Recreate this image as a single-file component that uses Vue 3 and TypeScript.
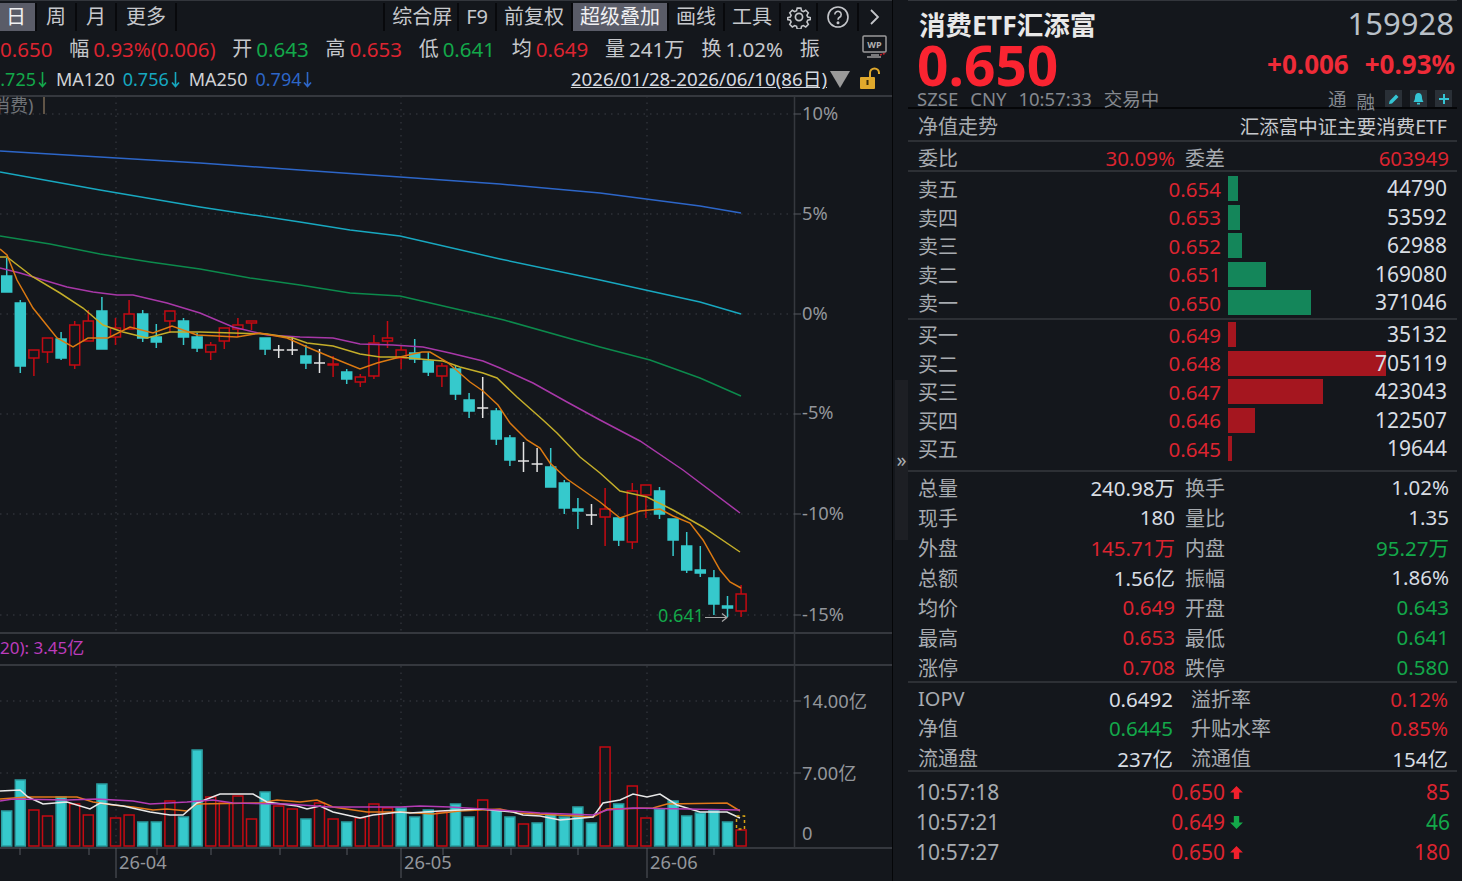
<template>
  <div class="screen">
    <!-- 左侧K线区 -->
    <section class="left">
      <div class="strip"></div>
      <nav class="toolbar">
        <div class="tool-group periods">
          <span v-for="p in periods" :key="p" class="tool" :class="{ active: p === '日' }">{{ p }}</span>
        </div>
        <div class="tool-group tools">
          <span v-for="t in tools" :key="t" class="tool" :class="{ active: t === '超级叠加' }">{{ t }}</span>
          <span class="tool icon gear">
            <svg width="24" height="24" viewBox="0 0 24 24" fill="none" stroke="#c4c6ca" stroke-width="1.7">
              <path d="M10 2.500h4l.7 2.900 2 .9 2.600-1.500 2.800 2.800-1.500 2.600.9 2 2.900.7v2l-2.900.7-.9 2 1.500 2.600-2.800 2.800-2.600-1.500-2 .9-.7 2.900h-4l-.7-2.900-2-.9-2.600 1.500-2.800-2.800 1.500-2.600-.9-2-2.900-.7v-2l2.900-.7.9-2-1.500-2.600 2.800-2.800 2.600 1.500 2-.9z" transform="translate(1 0.800) scale(0.92)" />
              <circle cx="12" cy="12" r="3.600" />
            </svg>
          </span>
          <span class="tool icon">
            <svg width="24" height="24" viewBox="0 0 24 24" fill="none" stroke="#c4c6ca" stroke-width="1.600">
              <circle cx="12" cy="12" r="10" />
              <path d="M8.800 9.500a3.200 3.200 0 1 1 4.800 2.800c-1 .6-1.600 1.200-1.600 2.400" />
              <circle cx="12" cy="17.800" r="0.700" fill="#c4c6ca" />
            </svg>
          </span>
          <span class="tool icon chevron">
            <svg width="14" height="18" viewBox="0 0 14 18" fill="none" stroke="#c4c6ca" stroke-width="1.800"><path d="M4 2l7 7-7 7" /></svg>
          </span>
        </div>
      </nav>

      <div class="quote-line">
        <span v-for="q in quoteLine" :key="q.label + q.value" class="quote-item">
          <em v-if="q.label">{{ q.label }}</em>
          <b :class="q.tone">{{ q.value }}</b>
        </span>
        <span class="wp-icon">
          <svg width="26" height="26" viewBox="0 0 26 26" fill="none">
            <rect x="1" y="2" width="23" height="16" rx="1" stroke="#9a9a9a" stroke-width="1.500" />
            <text x="12.500" y="14" text-anchor="middle" class="wp-text">WP</text>
            <path d="M9 21h8M5 23h14" stroke="#9a9a9a" stroke-width="1.500" />
            <path d="M18 21l6-2" stroke="#c8202a" stroke-width="1.500" stroke-dasharray="2 1" />
          </svg>
        </span>
      </div>

      <div class="ma-line">
        <template v-for="m in maItems" :key="m.value">
          <span v-if="m.name" class="ma-name">{{ m.name }}</span>
          <span class="ma-value" :class="[m.tone, { 'ma-clip': !m.name }]">
            {{ m.value }}
            <svg width="9" height="17" viewBox="0 0 9 17" fill="none" stroke="currentColor" stroke-width="1.600"><path d="M4.500 1v14M1 11.500l3.500 4 3.500-4" /></svg>
          </span>
        </template>
        <span class="range">2026/01/28-2026/06/10(86日)</span>
        <span class="range-arrow"></span>
        <svg class="lock" width="24" height="24" viewBox="0 0 24 24" fill="none">
          <rect x="1" y="10" width="15" height="12" rx="1" fill="#e0a92c" />
          <rect x="7.500" y="13" width="2" height="5" fill="#3a2c08" />
          <path d="M11 10V6a4.500 4.500 0 0 1 9 0v1" stroke="#e0a92c" stroke-width="2" />
        </svg>
      </div>

      <svg class="chart" width="893" height="786" viewBox="0 95 893 786">
        <!-- 网格 -->
        <g stroke="#3b3e44" stroke-dasharray="1.500 5">
          <line v-for="y in priceGrid" :key="'g' + y" x1="0" x2="794" :y1="y" :y2="y" />
          <line v-for="x in gridX" :key="'v' + x" :x1="x" :x2="x" y1="96" y2="632" />
          <line v-for="x in gridX" :key="'w' + x" :x1="x" :x2="x" y1="666" y2="847" />
          <line x1="0" x2="794" y1="701" y2="701" />
          <line x1="0" x2="794" y1="773" y2="773" />
        </g>
        <g stroke="#35383e" stroke-width="2">
          <line x1="0" x2="893" y1="96" y2="96" />
          <line x1="0" x2="893" y1="633" y2="633" />
          <line x1="0" x2="893" y1="665" y2="665" />
          <line x1="0" x2="893" y1="848" y2="848" />
          <line x1="794.500" x2="794.500" y1="96" y2="848" stroke-width="1.500" />
        </g>
        <g stroke="#55585e">
          <line v-for="y in [114, 214, 314, 414, 514, 615, 701, 773]" :key="'t' + y" x1="794" x2="801" :y1="y" :y2="y" />
          <line v-for="x in dateTicks" :key="'d' + x" :x1="x" :x2="x" y1="848" y2="855" />
          <line v-for="x in gridX" :key="'l' + x" :x1="x" :x2="x" y1="848" y2="878" />
        </g>

        <text x="-8" y="112" class="legend">消费)</text>
        <line x1="44" x2="44" y1="97" y2="114" stroke="#7a6a55" stroke-width="1.500" />

        <!-- K线 -->
        <g v-for="c in candleShapes" :key="c.x">
          <line :x1="c.x" :x2="c.x" :y1="c.hi" :y2="c.lo" :stroke="c.stroke" stroke-width="1.500" />
          <line v-if="c.kind === 'x'" :x1="c.x - 5.500" :x2="c.x + 5.500" :y1="c.top" :y2="c.top" stroke="#e4e4e4" stroke-width="1.500" />
          <rect v-else :x="c.x - 5" :y="c.top" width="10" :height="c.height" :fill="c.fill" :stroke="c.stroke" stroke-width="1.500" />
        </g>

        <!-- 均线 -->
        <polyline v-for="l in maLines" :key="l.color" :points="l.points" :stroke="l.color" fill="none" stroke-width="1.500" />

        <text x="658" y="622" class="low-label">0.641</text>
        <path d="M705 617.500h22m-5-4l5 4-5 4" stroke="#a8a8a8" stroke-width="1.200" fill="none" />

        <text x="0" y="654" class="vol-legend">20): 3.45亿</text>

        <!-- 成交额 -->
        <rect v-for="b in volumeBars" :key="'b' + b.x" :x="b.x - 5" :y="b.top" width="10" :height="846 - b.top" :fill="b.fill" :stroke="b.stroke" stroke-width="1.500" />
        <polyline v-for="l in volLines" :key="l.color" :points="l.points" :stroke="l.color" fill="none" stroke-width="1.500" />
        <rect x="736.500" y="816" width="8" height="13" fill="none" stroke="#d9a514" stroke-width="1.500" stroke-dasharray="3 3" />

        <!-- 坐标 -->
        <text v-for="a in axisLabels" :key="a.t" x="802" :y="a.y" class="axis">{{ a.t }}</text>
        <text v-for="d in dateLabels" :key="d.t" :x="d.x" y="869" class="axis">{{ d.t }}</text>
      </svg>
    </section>

    <!-- 折叠手柄 -->
    <div class="handle">
      <div class="handle-tab">»</div>
    </div>

    <!-- 右侧盘口 -->
    <aside class="panel">
      <div class="strip"></div>
      <header class="head">
        <div class="head-row title-row">
          <h1>消费ETF汇添富</h1>
          <span class="code">159928</span>
        </div>
        <div class="head-row price-row">
          <strong class="price">0.650</strong>
          <span class="change">
            <span>+0.006</span>
            <span>+0.93%</span>
          </span>
        </div>
        <div class="head-row sub-row">
          <span class="sub-left">
            <span>SZSE</span><span>CNY</span><span>10:57:33</span><span>交易中</span>
          </span>
          <span class="sub-right">
            <span class="tag">通</span>
            <span class="tag low">融</span>
            <span class="mini">
              <svg width="12" height="12" viewBox="0 0 12 12" fill="#34c4d4"><path d="M1 11l.6-3L8 1.500 10.500 4 4 10.400z" /></svg>
            </span>
            <span class="mini">
              <svg width="13" height="13" viewBox="0 0 13 13" fill="#34c4d4"><path d="M6.500 1C4.200 1 3 3 3 5.500 3 8 2 9 1.500 10h10C11 9 10 8 10 5.500 10 3 8.800 1 6.500 1z" /><rect x="5" y="10.800" width="3" height="1.700" /></svg>
            </span>
            <span class="mini">
              <svg width="12" height="12" viewBox="0 0 12 12" fill="#34c4d4"><path d="M5 1h2v4h4v2H7v4H5V7H1V5h4z" /></svg>
            </span>
          </span>
        </div>
      </header>

      <div class="line nav-row">
        <span class="lab">净值走势</span>
        <span class="fund">汇添富中证主要消费ETF</span>
      </div>

      <div class="line pair-row ratio-row">
        <div class="cell"><span class="lab">委比</span><span class="red">30.09%</span></div>
        <div class="cell"><span class="lab">委差</span><span class="red">603949</span></div>
      </div>

      <div class="line book sell-book">
        <div v-for="r in sellRows" :key="r.name" class="book-row">
          <span class="lab">{{ r.name }}</span>
          <span class="red book-price">{{ r.price }}</span>
          <div class="depth">
            <i class="bar sell" :style="{ width: barWidth(r.vol) + 'px' }"></i>
            <span class="val">{{ r.vol }}</span>
          </div>
        </div>
      </div>

      <div class="line book buy-book">
        <div v-for="r in buyRows" :key="r.name" class="book-row">
          <span class="lab">{{ r.name }}</span>
          <span class="red book-price">{{ r.price }}</span>
          <div class="depth">
            <i class="bar buy" :style="{ width: barWidth(r.vol) + 'px' }"></i>
            <span class="val">{{ r.vol }}</span>
          </div>
        </div>
      </div>

      <div class="line stats">
        <div v-for="s in statRows" :key="s.a" class="pair-row">
          <div class="cell"><span class="lab">{{ s.a }}</span><span :class="s.at">{{ s.av }}</span></div>
          <div class="cell"><span class="lab">{{ s.b }}</span><span :class="s.bt">{{ s.bv }}</span></div>
        </div>
      </div>

      <div class="line etf">
        <div v-for="s in etfRows" :key="s.a" class="pair-row">
          <div class="cell"><span class="lab">{{ s.a }}</span><span :class="s.at">{{ s.av }}</span></div>
          <div class="cell"><span class="lab">{{ s.b }}</span><span :class="s.bt">{{ s.bv }}</span></div>
        </div>
      </div>

      <div class="ticks">
        <div v-for="t in ticks" :key="t.time" class="tick-row">
          <span class="lab">{{ t.time }}</span>
          <span class="red price-cell">{{ t.price }}</span>
          <svg width="15" height="15" viewBox="0 0 14 14" :fill="t.up ? '#f0202c' : '#14a84a'">
            <path v-if="t.up" d="M7 1l6 6H9.500v6h-5V7H1z" />
            <path v-else d="M7 13L1 7h3.500V1h5v6H13z" />
          </svg>
          <span :class="t.volTone" class="tick-vol">{{ t.vol }}</span>
        </div>
      </div>
    </aside>
  </div>
</template>

<script setup lang="ts">
type Kind = 'u' | 'd' | 'x'
type Candle = [Kind, number, number, number, number]

const periods = ['日', '周', '月', '更多']
const tools = ['综合屏', 'F9', '前复权', '超级叠加', '画线', '工具']

const quoteLine = [
  { label: '', value: '0.650', tone: 'red' },
  { label: '幅', value: '0.93%(0.006)', tone: 'red' },
  { label: '开', value: '0.643', tone: 'green' },
  { label: '高', value: '0.653', tone: 'red' },
  { label: '低', value: '0.641', tone: 'green' },
  { label: '均', value: '0.649', tone: 'red' },
  { label: '量', value: '241万', tone: 'plain' },
  { label: '换', value: '1.02%', tone: 'plain' },
  { label: '振', value: '', tone: 'plain' }
]

const maItems = [
  { name: '', value: '0.725', tone: 'green' },
  { name: 'MA120', value: '0.756', tone: 'cyan' },
  { name: 'MA250', value: '0.794', tone: 'blue' }
]

// 屏幕坐标：类型, 实体上沿, 实体下沿, 上影, 下影
const candles: Candle[] = [
  ['d', 276, 292, 258, 292], ['d', 303, 366, 300, 373], ['u', 350, 358, 350, 376], ['u', 338, 352, 338, 363],
  ['d', 339, 358, 332, 360], ['u', 325, 365, 321, 369], ['u', 321, 341, 310, 341], ['d', 311, 349, 297, 349],
  ['u', 328, 337, 318, 345], ['u', 314, 329, 300, 329], ['d', 314, 338, 310, 342], ['d', 337, 342, 324, 348],
  ['u', 311, 321, 311, 333], ['d', 321, 337, 318, 345], ['d', 337, 348, 333, 352], ['u', 345, 352, 342, 360],
  ['u', 328, 341, 328, 349], ['u', 325, 329, 318, 337], ['u', 321, 323, 321, 330], ['d', 338, 349, 338, 355],
  ['x', 350, 350, 345, 358], ['x', 350, 350, 337, 355], ['d', 356, 363, 345, 369], ['x', 363, 363, 349, 373],
  ['u', 364, 365, 356, 377], ['d', 372, 379, 369, 384], ['u', 377, 382, 374, 387], ['u', 343, 376, 335, 379],
  ['u', 338, 341, 321, 348], ['u', 350, 358, 345, 369], ['d', 353, 359, 339, 363], ['d', 361, 372, 352, 376],
  ['u', 366, 376, 363, 387], ['d', 369, 394, 366, 400], ['d', 400, 411, 393, 418], ['x', 408, 408, 377, 418],
  ['d', 411, 439, 408, 445], ['d', 438, 460, 435, 466], ['x', 461, 461, 442, 472], ['x', 464, 464, 448, 472],
  ['d', 467, 487, 448, 487], ['d', 483, 508, 480, 514], ['d', 509, 511, 498, 529], ['x', 515, 515, 504, 525],
  ['u', 509, 517, 488, 546], ['d', 518, 540, 518, 546], ['u', 491, 542, 483, 549], ['u', 485, 495, 485, 518],
  ['d', 491, 514, 487, 519], ['d', 519, 540, 519, 556], ['d', 546, 570, 532, 573], ['d', 570, 573, 546, 577],
  ['d', 578, 604, 570, 615], ['d', 606, 608, 596, 617], ['u', 594, 611, 585, 617]
]

const volumes: [Kind, number][] = [
  ['d', 811], ['d', 780], ['u', 810], ['u', 816], ['d', 797], ['u', 804], ['u', 815], ['d', 784], ['u', 818],
  ['u', 815], ['d', 822], ['d', 822], ['u', 801], ['d', 817], ['d', 750], ['u', 797], ['u', 803], ['u', 796],
  ['u', 819], ['d', 792], ['u', 806], ['u', 809], ['d', 819], ['u', 803], ['u', 819], ['d', 822], ['u', 818],
  ['u', 804], ['u', 808], ['d', 808], ['d', 817], ['d', 810], ['u', 812], ['d', 804], ['d', 817], ['u', 800],
  ['d', 810], ['d', 817], ['u', 824], ['d', 823], ['d', 814], ['d', 817], ['d', 807], ['d', 823], ['u', 747],
  ['d', 804], ['u', 786], ['u', 818], ['d', 809], ['d', 801], ['d', 816], ['d', 813], ['d', 810], ['d', 822],
  ['u', 830]
]

const xAt = (i: number) => 6.7 + 13.6 * i

const candleShapes = candles.map(([kind, top, bottom, hi, lo], i) => ({
  x: xAt(i),
  kind,
  top,
  height: bottom - top,
  hi,
  lo,
  stroke: kind === 'u' ? '#c40a12' : kind === 'x' ? '#e4e4e4' : '#36c9cc',
  fill: kind === 'u' ? '#14171c' : '#36c9cc'
}))

const volumeBars = volumes.map(([kind, top], i) => ({
  x: xAt(i),
  top,
  fill: kind === 'u' ? 'none' : '#36c9cc',
  stroke: kind === 'u' ? '#c40a12' : '#2a9da0'
}))

const maLines = [
  { color: '#2d66c8', points: '0,151 100,157 200,163 300,170 400,177 500,184 600,193 700,206 741,213' },
  { color: '#18a8c0', points: '0,172 100,190 200,207 300,222 350,230 400,236 500,259 600,280 700,302 741,314' },
  { color: '#0c8a4c', points: '0,236 50,244 100,254 150,262 200,269 250,278 300,285 350,293 400,296 504,320 600,347 650,360 700,378 741,396' },
  { color: '#a838a8', points: '0,268 20,273 40,279 67,287 93,292 117,295 133,295 167,303 200,313 233,327 267,335 300,337 333,338 360,344 393,345 423,347 450,353 483,361 500,368 533,383 567,402 600,420 640,441 683,470 740,513' },
  { color: '#c4ae2a', points: '0,257 7,257 33,277 60,293 83,308 103,325 123,332 147,338 170,332 200,332 233,333 267,334 293,338 307,343 333,346 360,354 380,357 400,357 420,359 443,361 460,367 483,373 497,378 517,397 543,420 557,433 580,457 600,473 620,491 647,497 673,510 703,527 740,552' },
  { color: '#dc7a12', points: '0,249 7,255 17,280 33,308 57,338 73,347 88,338 108,338 130,327 153,333 172,326 197,335 237,337 260,333 287,338 307,347 333,358 360,369 377,363 400,357 422,352 430,352 447,362 470,382 483,391 498,405 510,423 527,440 540,448 550,463 567,479 600,502 620,518 640,511 660,509 673,516 690,523 703,540 720,570 730,582 741,588' }
]

const volLines = [
  { color: '#e0781a', points: '0,799 27,797 77,797 93,802 113,805 133,807 153,810 167,809 187,811 197,804 260,803 277,800 300,802 317,800 333,807 367,812 400,812 433,814 460,811 500,809 517,813 557,815 593,817 607,809 653,808 667,804 727,803 740,811' },
  { color: '#e8e8e8', points: '0,791 20,790 28,797 43,804 67,802 90,809 100,803 123,806 150,812 170,815 183,815 197,803 220,794 253,794 267,802 297,806 307,809 320,806 333,812 360,818 373,815 400,812 410,813 440,811 480,809 513,812 523,815 540,816 560,820 593,817 603,803 620,800 633,794 647,797 660,794 677,805 700,812 727,812 740,818' },
  { color: '#b53cb5', points: '0,801 13,799 67,800 97,799 133,801 150,804 187,802 213,800 233,803 287,804 330,807 400,807 420,806 450,807 483,809 513,811 540,813 593,815 607,810 633,808 740,810' }
]

const priceGrid = [114, 214, 314, 414, 514, 615]
const gridX = [116, 401, 647]
const dateTicks = [20, 89, 157, 211, 280, 347, 443, 511, 578, 714]

const axisLabels = [
  { t: '10%', y: 120 }, { t: '5%', y: 220 }, { t: '0%', y: 320 }, { t: '-5%', y: 419 },
  { t: '-10%', y: 520 }, { t: '-15%', y: 621 }, { t: '14.00亿', y: 708 }, { t: '7.00亿', y: 780 }, { t: '0', y: 840 }
]
const dateLabels = [
  { t: '26-04', x: 119 }, { t: '26-05', x: 404 }, { t: '26-06', x: 650 }
]

const barWidth = (vol: number) => Math.round(vol * 0.000224)

const sellRows = [
  { name: '卖五', price: '0.654', vol: 44790 },
  { name: '卖四', price: '0.653', vol: 53592 },
  { name: '卖三', price: '0.652', vol: 62988 },
  { name: '卖二', price: '0.651', vol: 169080 },
  { name: '卖一', price: '0.650', vol: 371046 }
]
const buyRows = [
  { name: '买一', price: '0.649', vol: 35132 },
  { name: '买二', price: '0.648', vol: 705119 },
  { name: '买三', price: '0.647', vol: 423043 },
  { name: '买四', price: '0.646', vol: 122507 },
  { name: '买五', price: '0.645', vol: 19644 }
]

const statRows = [
  { a: '总量', av: '240.98万', at: 'val', b: '换手', bv: '1.02%', bt: 'val' },
  { a: '现手', av: '180', at: 'val', b: '量比', bv: '1.35', bt: 'val' },
  { a: '外盘', av: '145.71万', at: 'red', b: '内盘', bv: '95.27万', bt: 'green' },
  { a: '总额', av: '1.56亿', at: 'val', b: '振幅', bv: '1.86%', bt: 'val' },
  { a: '均价', av: '0.649', at: 'red', b: '开盘', bv: '0.643', bt: 'green' },
  { a: '最高', av: '0.653', at: 'red', b: '最低', bv: '0.641', bt: 'green' },
  { a: '涨停', av: '0.708', at: 'red', b: '跌停', bv: '0.580', bt: 'green' }
]

const etfRows = [
  { a: 'IOPV', av: '0.6492', at: 'val', b: '溢折率', bv: '0.12%', bt: 'red' },
  { a: '净值', av: '0.6445', at: 'green', b: '升贴水率', bv: '0.85%', bt: 'red' },
  { a: '流通盘', av: '237亿', at: 'val', b: '流通值', bv: '154亿', bt: 'val' }
]

const ticks = [
  { time: '10:57:18', price: '0.650', up: true, vol: 85, volTone: 'red' },
  { time: '10:57:21', price: '0.649', up: false, vol: 46, volTone: 'green' },
  { time: '10:57:27', price: '0.650', up: true, vol: 180, volTone: 'red' }
]
</script>

<style scoped>
.screen {
  display: flex;
  width: 1462px;
  height: 881px;
  overflow: hidden;
  background: #14171c;
  color: #d6dae0;
  font-family: "Noto Sans", "Noto Sans CJK SC", sans-serif;
  font-size: 20px;
}

.strip {
  height: 3px;
  box-sizing: border-box;
  border-top: 1px solid #33363c;
}

.left {
  width: 893px;
  flex: none;
  overflow: hidden;
  border-right: 1px solid #050608;
  box-sizing: border-box;
}

.toolbar {
  display: flex;
  justify-content: space-between;
  height: 28px;
  padding-right: 4px;
}

.tool-group {
  display: flex;
}

.periods {
  margin-left: -3px;
}

.tool {
  display: flex;
  align-items: center;
  padding: 0 9px;
  color: #c6c8cc;
  line-height: 28px;
  border-right: 2px solid #08090c;
}

.tools .tool {
  padding: 0 7px;
  border-right: none;
  border-left: 2px solid #08090c;
}

.tools .tool:first-child {
  padding-right: 5px;
}

.tools .tool.icon {
  padding: 0 7px 0 8px;
}

.tools .tool.gear {
  padding: 0 5px 0 6px;
}

.tools .chevron {
  padding: 0 6px 0 8px;
}

.tool.active {
  background: #5a5c68;
  color: #f0f0f2;
}

.quote-line {
  display: flex;
  align-items: center;
  gap: 16.750px;
  height: 36px;
  line-height: 36px;
  white-space: nowrap;
}

.quote-item {
  display: flex;
  gap: 4px;
}

.quote-item em {
  font-style: normal;
  color: #c6c8cc;
}

.quote-item b {
  font-weight: 400;
  font-size: 20.500px;
}

.plain {
  color: #c6c8cc;
}

.wp-icon {
  display: flex;
  margin-left: auto;
  margin-right: 4px;
  margin-top: -5px;
}

.wp-text {
  font-size: 9px;
  font-weight: 700;
  fill: #b0b0b0;
}

.ma-line {
  display: flex;
  align-items: center;
  height: 24px;
  margin-bottom: 4px;
  line-height: 24px;
  font-size: 18px;
  white-space: nowrap;
}

.ma-value {
  display: flex;
  align-items: center;
  gap: 2px;
}

.ma-clip {
  margin-left: -10px;
}

.ma-name {
  margin: 0 8px 0 9px;
  color: #d0d2d6;
}

.range {
  margin-left: auto;
  font-size: 18.700px;
  text-decoration: underline;
  color: #d6dae0;
}

.range-arrow {
  width: 0;
  height: 0;
  margin: 0 9px 0 3px;
  border-left: 10px solid transparent;
  border-right: 10px solid transparent;
  border-top: 17px solid #9a9a9a;
}

.lock {
  margin-right: 9px;
  flex: none;
}

.chart {
  display: block;
  overflow: hidden;
}

.legend {
  font-size: 18px;
  fill: #6f7277;
}

.low-label {
  font-size: 18px;
  fill: #13a84a;
}

.vol-legend {
  font-size: 17px;
  fill: #bc3cbc;
}

.axis {
  font-size: 18.300px;
  fill: #93969b;
}

.handle {
  display: flex;
  align-items: center;
  width: 15px;
  flex: none;
  padding-top: 38px;
  box-sizing: border-box;
}

.handle-tab {
  display: flex;
  align-items: center;
  justify-content: center;
  width: 13px;
  height: 160px;
  margin-left: 2px;
  background: #1d1f24;
  color: #a8abb0;
  font-size: 20px;
}

.panel {
  width: 553px;
  flex: none;
  box-sizing: border-box;
  padding-right: 4px;
}

.head {
  height: 104px;
  padding: 0 0 0 10px;
  border-bottom: 2px solid #050608;
}

.head-row {
  display: flex;
  align-items: center;
  justify-content: space-between;
  padding-right: 2px;
}

.title-row {
  height: 40px;
  margin-left: 1px;
}

.title-row h1 {
  margin: 0;
  font-size: 26.500px;
  font-weight: 700;
  color: #e8e8e8;
}

.code {
  font-size: 31px;
  font-weight: 400;
  color: #b9c0c8;
  margin-right: 1px;
}

.price-row {
  height: 44px;
  margin-top: 0;
}

.price {
  margin-left: -1px;
  font-size: 55px;
  line-height: 44px;
  font-weight: 700;
  color: #fa2431;
}

.change {
  display: flex;
  gap: 16px;
  font-size: 26px;
  font-weight: 700;
  color: #ee2b38;
  margin-top: -2px;
}

.sub-row {
  height: 17px;
  margin-top: 3px;
  font-size: 18.500px;
  color: #85898f;
  line-height: 17px;
  padding-right: 5px;
}

.sub-left {
  display: flex;
  gap: 12px;
  margin-left: -1px;
}

.sub-right {
  display: flex;
  align-items: center;
  gap: 8px;
}

.tag {
  margin-right: 2px;
}

.tag.low {
  margin-top: 5px;
}

.mini {
  display: flex;
  align-items: center;
  justify-content: center;
  width: 17px;
  height: 17px;
  background: #2a3037;
}

.line {
  border-bottom: 2px solid #2d3035;
}

.lab {
  color: #a7abb0;
}

.val {
  color: #d8dde3;
}

.val,
.cell .red,
.cell .green,
.book-price {
  font-size: 20.500px;
}

.red {
  color: #dc2430;
}

.green {
  color: #13a84a;
}

.cyan {
  color: #16a8c0;
}

.blue {
  color: #2d66c8;
}

.nav-row {
  display: flex;
  align-items: center;
  justify-content: space-between;
  height: 29px;
  padding: 2px 10px 0 10px;
}

.fund {
  color: #c6c8cc;
  font-size: 19.500px;
}

.pair-row {
  display: grid;
  grid-template-columns: 257px 264px;
  column-gap: 10px;
  padding-left: 10px;
  height: 30px;
  align-items: center;
}

.ratio-row {
  height: 27px;
  padding-top: 1px;
}

.cell {
  display: flex;
  justify-content: space-between;
  align-items: center;
  white-space: nowrap;
}

.sell-book {
  padding: 2px 0 1.500px;
}

.buy-book {
  padding: 0 0 7.500px;
}

.book-row {
  display: grid;
  grid-template-columns: 40px 263px 226px;
  align-items: center;
  height: 28.500px;
  padding-left: 10px;
}

.book-price {
  text-align: right;
}

.depth {
  display: grid;
  align-items: center;
  margin-left: 7px;
}

.depth > * {
  grid-area: 1 / 1;
}

.bar {
  display: block;
  height: 25px;
}

.bar.sell {
  background: #14865a;
}

.bar.buy {
  background: #a5161f;
}

.depth .val {
  justify-self: end;
  z-index: 1;
  font-size: 21px;
  line-height: 25px;
}

.stats {
  height: 209px;
}

.etf {
  height: 86px;
  padding-top: 1px;
}

.etf .pair-row {
  grid-template-columns: 255px 257px;
  column-gap: 18px;
  height: 29.300px;
}

.ticks {
  padding: 5px 0 0 8px;
  font-size: 21px;
}

.tick-row {
  display: grid;
  grid-template-columns: 309px 20px 205px;
  align-items: center;
  height: 30px;
}

.tick-row .price-cell {
  grid-column: 1;
  grid-row: 1;
  justify-self: end;
}

.tick-row .lab {
  grid-column: 1;
  grid-row: 1;
}

.tick-row svg {
  grid-column: 2;
  margin-left: 4px;
}

.tick-vol {
  text-align: right;
}
</style>

<style>
html,
body {
  background: #14171c;
}
</style>
